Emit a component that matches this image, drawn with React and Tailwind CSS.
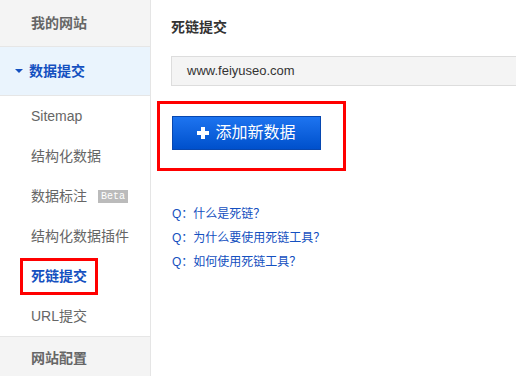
const font = { fontFamily: '"Liberation Sans", Arial, "Noto Sans CJK SC", sans-serif' };

const items = ['Sitemap', '结构化数据', '数据标注', '结构化数据插件', '死链提交', 'URL提交'];

const faqs = ['什么是死链？', '为什么要使用死链工具？', '如何使用死链工具？'];

function SideItem({ label }) {
  if (label === '死链提交') {
    return (
      <div className="h-10 flex items-center pl-5">
        <span className="border-[3px] border-[#ff0000] px-2 py-[7px] leading-[17px] text-[14px] font-bold text-[#1450c0]">
          {label}
        </span>
      </div>
    );
  }
  return (
    <div className="h-10 flex items-center pl-[31px] text-[14px] text-[#666]">
      {label}
      {label === '数据标注' && (
        <span className="ml-[11px] bg-[#bbb] text-white text-[10px] leading-[13px] px-[3px] font-mono">Beta</span>
      )}
    </div>
  );
}

export default function App() {
  return (
    <div className="flex w-[516px] h-[376px] overflow-hidden bg-white" style={font}>
      <aside className="w-[151px] shrink-0 border-r border-[#e5e5e5] flex flex-col">
        <div className="h-[47px] bg-[#f4f4f4] border-b border-[#e6e6e6] flex items-center pl-[31px] text-[14px] font-bold text-[#666]">
          我的网站
        </div>
        <div className="h-[49px] bg-[#eaf4fd] border-b border-[#e6e6e6] flex items-center pl-[15px] text-[14px] font-bold text-[#1450c0]">
          <span className="mr-[6px] w-0 h-0 border-l-[4px] border-r-[4px] border-t-[4px] border-l-transparent border-r-transparent border-t-[#1450c0]" />
          数据提交
        </div>
        {items.map(label => (
          <SideItem key={label} label={label} />
        ))}
        <div className="flex-1 bg-[#f4f4f4] border-t border-[#e6e6e6] flex items-start pt-[11px] pl-[31px] text-[14px] font-bold text-[#666]">
          网站配置
        </div>
      </aside>

      <main className="flex-1 pl-5 pt-[18px]">
        <h2 className="text-[14px] font-bold text-[#333] leading-[18px]">死链提交</h2>
        <div className="mt-5 h-[30px] bg-[#f4f4f4] border border-[#ddd] border-r-0 flex items-center pl-[15px] text-[13px] text-[#333]">
          www.feiyuseo.com
        </div>
        <div className="mt-[15px] -ml-[14px] w-[189px] h-[70px] border-[3px] border-[#ff0000] pt-3 pl-3">
          <button className="w-[149px] h-[34px] border border-[#0747b0] bg-gradient-to-b from-[#1d74f0] to-[#0050cc] text-white text-[16px] flex items-center justify-center gap-[6px]">
            <span className="relative w-3 h-3">
              <span className="absolute left-0 top-[4px] w-3 h-[4px] bg-white" />
              <span className="absolute top-0 left-[4px] w-[4px] h-3 bg-white" />
            </span>
            添加新数据
          </button>
        </div>
        <div className="mt-[35px] flex flex-col gap-[7px] pl-px">
          {faqs.map(q => (
            <a key={q} className="text-[12px] leading-[17px] text-[#1450c0]">Q：{q}</a>
          ))}
        </div>
      </main>
    </div>
  );
}
